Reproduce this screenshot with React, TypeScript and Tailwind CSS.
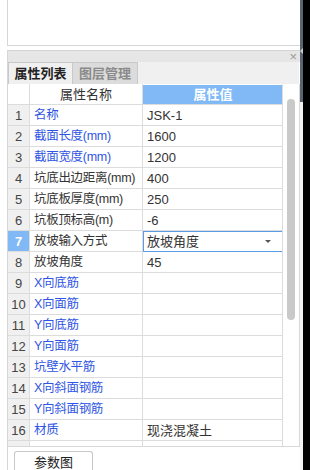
import React from "react";

type Row = { name: string; value: string; blue: boolean; select?: boolean };

const rows: Row[] = [
  { name: "名称", value: "JSK-1", blue: true },
  { name: "截面长度(mm)", value: "1600", blue: true },
  { name: "截面宽度(mm)", value: "1200", blue: true },
  { name: "坑底出边距离(mm)", value: "400", blue: false },
  { name: "坑底板厚度(mm)", value: "250", blue: false },
  { name: "坑板顶标高(m)", value: "-6", blue: false },
  { name: "放坡输入方式", value: "放坡角度", blue: false, select: true },
  { name: "放坡角度", value: "45", blue: false },
  { name: "X向底筋", value: "", blue: true },
  { name: "X向面筋", value: "", blue: true },
  { name: "Y向底筋", value: "", blue: true },
  { name: "Y向面筋", value: "", blue: true },
  { name: "坑壁水平筋", value: "", blue: true },
  { name: "X向斜面钢筋", value: "", blue: true },
  { name: "Y向斜面钢筋", value: "", blue: true },
  { name: "材质", value: "现浇混凝土", blue: true },
];

const font = { fontFamily: '"Liberation Sans", "Noto Sans CJK SC", sans-serif' };

export default function App() {
  return (
    <div className="w-[310px] h-[470px] flex overflow-hidden bg-white text-[13px] leading-none" style={font}>
      <div className="w-[300px] flex flex-col pl-[7px]">
        {/* top drawing box */}
        <div className="h-[46px] shrink-0 border-l border-b border-[#d6d6d6] bg-white" />
        <div className="h-[4px] shrink-0" />

        {/* property panel */}
        <div className="flex-1 flex flex-col border-l border-[#d6d6d6] min-h-0">
          <div className="h-[12px] shrink-0 bg-[#e6e6e6] border-t border-[#d4d4d4] flex items-center justify-end pr-[3px]">
            <span className="text-[13px] leading-none text-[#9a9a9a] -mt-[1px]">×</span>
          </div>

          <div className="h-[22px] shrink-0 bg-[#f0f0f0] flex mr-[1px]">
            <div className="w-[65px] border border-[#c9c9c9] border-b-0 bg-[#f0f0f0] flex items-center justify-center font-bold text-[#222]">
              属性列表
            </div>
            <div className="w-[65px] border-t border-r border-[#c9c9c9] bg-[#dcdcdc] flex items-center justify-center font-bold text-[#8a8a8a]">
              图层管理
            </div>
          </div>

          {/* table + scrollbar */}
          <div className="h-[363px] shrink-0 flex border-b border-r border-[#d8d8d8] bg-white">
            <div className="w-[275px] overflow-hidden border-r border-[#dcdcdc]">
              <div className="grid grid-cols-[22px_113px_140px] h-[21px] border-b border-[#dcdcdc]">
                <div className="border-r border-[#dcdcdc]" />
                <div className="border-r border-[#dcdcdc] flex items-center justify-center text-[#333]">属性名称</div>
                <div className="bg-[#80b9f6] flex items-center justify-center font-bold text-white mt-[1px]">属性值</div>
              </div>
              {rows.map((r, i) => (
                <div key={r.name} className="grid grid-cols-[22px_113px_140px] h-[21px] border-b border-[#dcdcdc]">
                  <div
                    className={
                      r.select
                        ? "bg-[#80b9f6] border-r border-[#dcdcdc] flex items-center justify-center text-white font-bold"
                        : "bg-[#f0f0f0] border-r border-[#dcdcdc] flex items-center justify-center text-[#444]"
                    }
                  >
                    {i + 1}
                  </div>
                  <div
                    className={
                      r.blue
                        ? "border-r border-[#dcdcdc] flex items-center pl-[4px] text-[#2f55e4] text-[12.5px] whitespace-nowrap tracking-[-0.3px]"
                        : "border-r border-[#dcdcdc] flex items-center pl-[4px] text-[#333] text-[12.5px] whitespace-nowrap tracking-[-0.3px]"
                    }
                  >
                    {r.name}
                  </div>
                  {r.select ? (
                    <div className="border border-[#5a9ce6] flex items-center justify-between pl-[3px] pr-[11px] text-[#333] -mb-[1px]">
                      <span>{r.value}</span>
                      <span className="w-0 h-0 border-x-[3px] border-x-transparent border-t-[3px] border-t-[#555]" />
                    </div>
                  ) : (
                    <div className="flex items-center pl-[4px] text-[#333] whitespace-nowrap">{r.value}</div>
                  )}
                </div>
              ))}
              <div className="grid grid-cols-[22px_113px_140px] h-[21px]">
                <div className="bg-[#f0f0f0] border-r border-[#dcdcdc]" />
                <div className="border-r border-[#dcdcdc]" />
                <div />
              </div>
            </div>
            <div className="flex-1 flex justify-center pt-[15px]">
              <div className="w-[8px] h-[221px] rounded-full bg-[#c9c9c9]" />
            </div>
          </div>

          <div className="flex-1 pl-[6px] pt-[4px]">
            <div className="w-[79px] h-[19px] border border-b-0 border-[#c8c8c8] rounded-t-[3px] bg-white flex justify-center pt-[4px] text-[#222]">
              参数图
            </div>
          </div>
        </div>
      </div>

      {/* right edge */}
      <div className="w-[3px] flex flex-col">
        <div className="h-[102px] bg-[#5b6570] relative">
          <span className="absolute left-[0px] top-[48px] w-0 h-0 border-y-[3px] border-y-transparent border-r-[3px] border-r-[#c8ccd0]" />
        </div>
        <div className="flex-1 bg-[#f3f3f3]" />
      </div>
      <div className="w-[7px] bg-black" />
    </div>
  );
}
